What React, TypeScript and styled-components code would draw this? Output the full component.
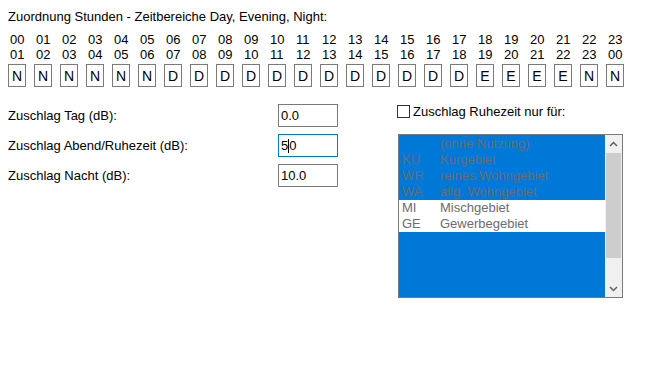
import React from "react";
import styled, { createGlobalStyle } from "styled-components";

const GlobalStyle = createGlobalStyle`
  html, body {
    margin: 0;
    padding: 0;
    background: #fff;
  }
  body {
    font-family: "Liberation Sans", Arial, sans-serif;
    font-size: 13px;
    color: #000;
  }
`;

const Page = styled.div`
  width: 660px;
  height: 370px;
  padding: 9px 8px 0;
  box-sizing: border-box;
`;

const Title = styled.div`
  line-height: 15px;
`;

const HourGrid = styled.div`
  display: grid;
  grid-template-columns: repeat(24, 26px);
  margin-top: 8px;
`;

const HourCol = styled.div`
  display: flex;
  flex-direction: column;
`;

const HourLabel = styled.span`
  line-height: 15px;
  padding-left: 2px;
`;

const PeriodBox = styled.div`
  margin-top: 2px;
  width: 18px;
  height: 23px;
  box-sizing: border-box;
  border: 1px solid #7a7a7a;
  display: flex;
  align-items: center;
  justify-content: center;
  font-size: 14px;
`;

const Settings = styled.div`
  display: flex;
  align-items: flex-start;
  margin-top: 17px;
`;

const Form = styled.div`
  display: grid;
  grid-template-columns: 270px 60px;
  row-gap: 7px;
  align-items: center;
`;

const FieldLabel = styled.span`
  line-height: 15px;
`;

const Field = styled.div<{ $focused?: boolean }>`
  height: 23px;
  box-sizing: border-box;
  border: 1px solid ${(p) => (p.$focused ? "#0078d7" : "#7a7a7a")};
  padding: 0 2px;
  display: flex;
  align-items: center;
  line-height: 15px;
`;

const Caret = styled.span`
  display: inline-block;
  width: 1px;
  height: 14px;
  background: #000;
`;

const Restriction = styled.div`
  margin-left: 59px;
  display: flex;
  flex-direction: column;
`;

const CheckRow = styled.label`
  display: flex;
  align-items: center;
  gap: 3px;
  height: 15px;
  line-height: 15px;
`;

const CheckBox = styled.span`
  width: 13px;
  height: 13px;
  box-sizing: border-box;
  border: 1px solid #333;
  background: #fff;
`;

const ListBox = styled.div`
  margin: 15px 0 0 1px;
  width: 225px;
  height: 164px;
  box-sizing: border-box;
  border: 1px solid #7a7a7a;
  display: flex;
`;

const ListArea = styled.div`
  flex: 1;
  background: #0078d7;
  padding-top: 1px;
`;

const ListRow = styled.div<{ $selected: boolean }>`
  display: grid;
  grid-template-columns: 38px 1fr;
  padding-left: 3px;
  height: 16px;
  line-height: 16px;
  color: #6d6d6d;
  background: ${(p) => (p.$selected ? "#0078d7" : "#fff")};
`;

const ScrollBar = styled.div`
  width: 17px;
  background: #f0f0f0;
  display: flex;
  flex-direction: column;
`;

const ScrollButton = styled.div`
  height: 17px;
  display: flex;
  align-items: center;
  justify-content: center;
`;

const Thumb = styled.div`
  height: 105px;
  margin: 1px 1px 0;
  background: #cdcdcd;
`;

const Track = styled.div`
  flex: 1;
`;

const pad = (n: number) => String(n % 24).padStart(2, "0");

const periods = "NNNNNNDDDDDDDDDDDDEEEENN".split("");

const zones = [
  { code: "", name: "(ohne Nutzung)", selected: true },
  { code: "KU", name: "Kurgebiet", selected: true },
  { code: "WR", name: "reines Wohngebiet", selected: true },
  { code: "WA", name: "allg. Wohngebiet", selected: true },
  { code: "MI", name: "Mischgebiet", selected: false },
  { code: "GE", name: "Gewerbegebiet", selected: false },
];

const Chevron = ({ up }: { up?: boolean }) => (
  <svg width="9" height="6" viewBox="0 0 9 6">
    <polyline
      points={up ? "1,5 4.5,1.5 8,5" : "1,1 4.5,4.5 8,1"}
      fill="none"
      stroke="#606060"
      strokeWidth="1.5"
    />
  </svg>
);

const App = () => {
  return (
    <Page>
      <GlobalStyle />
      <Title>Zuordnung Stunden - Zeitbereiche Day, Evening, Night:</Title>

      <HourGrid>
        {periods.map((p, i) => (
          <HourCol key={i}>
            <HourLabel>{pad(i)}</HourLabel>
            <HourLabel>{pad(i + 1)}</HourLabel>
            <PeriodBox>{p}</PeriodBox>
          </HourCol>
        ))}
      </HourGrid>

      <Settings>
        <Form>
          <FieldLabel>Zuschlag Tag (dB):</FieldLabel>
          <Field>0.0</Field>
          <FieldLabel>Zuschlag Abend/Ruhezeit (dB):</FieldLabel>
          <Field $focused>
            5<Caret />0
          </Field>
          <FieldLabel>Zuschlag Nacht (dB):</FieldLabel>
          <Field>10.0</Field>
        </Form>

        <Restriction>
          <CheckRow>
            <CheckBox />
            Zuschlag Ruhezeit nur für:
          </CheckRow>
          <ListBox>
            <ListArea>
              {zones.map((z) => (
                <ListRow key={z.name} $selected={z.selected}>
                  <span>{z.code}</span>
                  <span>{z.name}</span>
                </ListRow>
              ))}
            </ListArea>
            <ScrollBar>
              <ScrollButton>
                <Chevron up />
              </ScrollButton>
              <Thumb />
              <Track />
              <ScrollButton>
                <Chevron />
              </ScrollButton>
            </ScrollBar>
          </ListBox>
        </Restriction>
      </Settings>
    </Page>
  );
};

export default App;
